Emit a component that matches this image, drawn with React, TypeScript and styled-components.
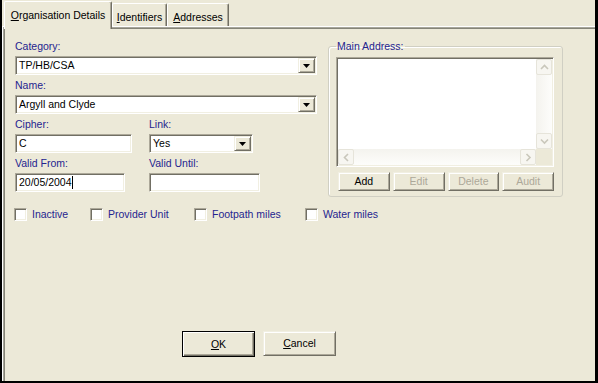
import React from "react";
import styled, { createGlobalStyle, css } from "styled-components";

const NAVY = "#24248f";
const FONT = `"Liberation Sans", Arial, sans-serif`;

const GlobalStyle = createGlobalStyle`
  html, body { margin: 0; padding: 0; background: #000; }
  body { font-family: ${FONT}; font-size: 10.5px; }
  * { box-sizing: border-box; }
`;

const Frame = styled.div`
  width: 598px;
  height: 383px;
  background: #000;
  padding: 0 3px 2px 2px;
`;

const Window = styled.div`
  height: 100%;
  background: #ece9d8;
  display: flex;
  flex-direction: column;
`;

const TabStrip = styled.div`
  display: flex;
  align-items: flex-end;
  height: 26px;
  padding-left: 2px;
  flex-shrink: 0;
`;

const Tab = styled.div<{ $active?: boolean; $w: number }>`
  position: relative;
  width: ${(p) => p.$w}px;
  height: ${(p) => (p.$active ? 28 : 23)}px;
  margin-bottom: ${(p) => (p.$active ? -3 : 0)}px;
  z-index: ${(p) => (p.$active ? 2 : 1)};
  padding-top: 7px;
  text-align: center;
  line-height: 13px;
  color: #000;
  background: #ece9d8;
  border-top: 1px solid #fff;
  border-left: 1px solid #fff;
  border-right: 1px solid #716f64;
  box-shadow: inset -1px 0 0 #aca899;
  border-radius: 2px 2px 0 0;
  white-space: nowrap;
`;

const Panel = styled.div`
  flex: 1;
  display: flex;
  flex-direction: column;
  border-top: 1px solid #fff;
  border-left: 1px solid #fff;
  box-shadow: inset 1px 1px 0 #a7a69a, inset 2px 2px 0 #858478;
  padding: 13px 0 24px 12px;
`;

const TopRow = styled.div`
  display: flex;
  align-items: flex-start;
  gap: 11px;
`;

const LeftColumn = styled.div`
  width: 302px;
  display: flex;
  flex-direction: column;
`;

const Field = styled.div`
  display: flex;
  flex-direction: column;
  margin-bottom: 4px;
`;

const FieldLabel = styled.div`
  color: ${NAVY};
  line-height: 13px;
  height: 13px;
  margin-bottom: 3px;
  white-space: nowrap;
`;

const FieldGrid = styled.div`
  display: grid;
  grid-template-columns: 134px 1fr;
`;

const sunken = css`
  background: #fff;
  border-style: solid;
  border-width: 1px;
  border-color: #aca899 #fff #fff #aca899;
  box-shadow: inset 1px 1px 0 #716f64, inset -1px -1px 0 #f1efe2;
`;

const raised = css`
  background: #ece9d8;
  border-style: solid;
  border-width: 1px;
  border-color: #f1efe2 #716f64 #716f64 #f1efe2;
  box-shadow: inset 1px 1px 0 #fff, inset -1px -1px 0 #aca899;
`;

const TextBox = styled.div<{ $w: number }>`
  ${sunken};
  width: ${(p) => p.$w}px;
  height: 19px;
  padding: 2px 2px 0 3px;
  line-height: 13px;
  color: #000;
  white-space: nowrap;
`;

const Caret = styled.span`
  display: inline-block;
  width: 1px;
  height: 13px;
  background: #000;
  vertical-align: top;
`;

const ComboBox = styled.div<{ $w: number }>`
  ${sunken};
  width: ${(p) => p.$w}px;
  height: 19px;
  padding: 1px;
  display: flex;
  align-items: stretch;
`;

const ComboText = styled.div`
  flex: 1;
  padding: 1px 0 0 2px;
  line-height: 13px;
  color: #000;
  white-space: nowrap;
`;

const DropButton = styled.div`
  ${raised};
  width: 17px;
  display: flex;
  align-items: center;
  justify-content: center;
`;

const GroupBox = styled.fieldset`
  width: 235px;
  margin: 0;
  min-width: 0;
  padding: 0 8px 5px 7px;
  border: 1px solid #d0cfc3;
  border-radius: 3px;
  box-shadow: inset 1px 1px 0 #fff;
`;

const GroupLegend = styled.legend`
  color: ${NAVY};
  line-height: 13px;
  padding: 0 1px;
  margin-left: 0;
`;

const ListBox = styled.div`
  ${sunken};
  margin-top: 4px;
  height: 110px;
  padding: 1px;
  display: grid;
  grid-template-columns: 1fr 16px;
  grid-template-rows: 1fr 16px;
`;

const ListArea = styled.div`
  background: #fff;
`;

const VScroll = styled.div`
  display: flex;
  flex-direction: column;
  justify-content: space-between;
  background: linear-gradient(to right, #f4f3ee, #fdfdfb);
`;

const HScroll = styled.div`
  display: flex;
  justify-content: space-between;
  background: linear-gradient(to bottom, #f4f3ee, #fdfdfb);
`;

const Corner = styled.div`
  background: #ece9d8;
`;

const ScrollArrow = styled.div`
  width: 16px;
  height: 16px;
  border: 1px solid #e6e4da;
  border-radius: 2px;
  background: #f7f6f1;
  display: flex;
  align-items: center;
  justify-content: center;
`;

const ActionRow = styled.div`
  display: flex;
  gap: 3px;
  margin-top: 5px;
  padding-left: 2px;
`;

const PushButton = styled.button<{ $w: number; $h: number; $default?: boolean }>`
  ${raised};
  width: ${(p) => p.$w}px;
  height: ${(p) => p.$h}px;
  padding: 0;
  font-family: ${FONT};
  font-size: 10.5px;
  line-height: 13px;
  color: #000;
  ${(p) =>
    p.$default &&
    css`
      border: 1px solid #000;
      box-shadow: inset 1px 1px 0 #fff, inset -1px -1px 0 #716f64, inset -2px -2px 0 #aca899;
    `}
  &:disabled {
    color: #aca899;
  }
`;

const CheckRow = styled.div`
  display: flex;
  margin-top: 11px;
  margin-left: -1px;
`;

const CheckItem = styled.label<{ $w?: number }>`
  display: flex;
  align-items: center;
  gap: 5px;
  ${(p) => (p.$w ? `width: ${p.$w}px;` : "")}
  color: ${NAVY};
  line-height: 13px;
  white-space: nowrap;
`;

const CheckBox = styled.span`
  width: 13px;
  height: 13px;
  flex-shrink: 0;
  ${sunken};
`;

const DialogButtons = styled.div`
  margin-top: auto;
  display: flex;
  gap: 8px;
  padding-left: 167px;
`;

const DownTriangle = () => (
  <svg width="7" height="4" viewBox="0 0 7 4">
    <polygon points="0,0 7,0 3.5,4" fill="#000" />
  </svg>
);

const Chevron = ({ dir }: { dir: "up" | "down" | "left" | "right" }) => {
  const pts = {
    up: "1,5 4.5,1.5 8,5",
    down: "1,1.5 4.5,5 8,1.5",
    left: "5,1 1.5,4.5 5,8",
    right: "1.5,1 5,4.5 1.5,8",
  }[dir];
  const vertical = dir === "up" || dir === "down";
  return (
    <svg width={vertical ? 9 : 7} height={vertical ? 7 : 9} viewBox={vertical ? "0 0 9 7" : "0 0 7 9"}>
      <polyline points={pts} fill="none" stroke="#c9c7bb" strokeWidth="1.6" />
    </svg>
  );
};

const Combo = ({ w, value }: { w: number; value: string }) => (
  <ComboBox $w={w}>
    <ComboText>{value}</ComboText>
    <DropButton>
      <DownTriangle />
    </DropButton>
  </ComboBox>
);

export default function App() {
  return (
    <>
      <GlobalStyle />
      <Frame>
        <Window>
          <TabStrip>
            <Tab $active $w={108}>
              <u>O</u>rganisation Details
            </Tab>
            <Tab $w={55}>
              <u>I</u>dentifiers
            </Tab>
            <Tab $w={62}>
              <u>A</u>ddresses
            </Tab>
          </TabStrip>
          <Panel>
            <TopRow>
              <LeftColumn>
                <Field>
                  <FieldLabel>Category:</FieldLabel>
                  <Combo w={302} value="TP/HB/CSA" />
                </Field>
                <Field>
                  <FieldLabel>Name:</FieldLabel>
                  <Combo w={302} value="Argyll and Clyde" />
                </Field>
                <FieldGrid>
                  <Field>
                    <FieldLabel>Cipher:</FieldLabel>
                    <TextBox $w={117}>C</TextBox>
                  </Field>
                  <Field>
                    <FieldLabel>Link:</FieldLabel>
                    <Combo w={104} value="Yes" />
                  </Field>
                  <Field>
                    <FieldLabel>Valid From:</FieldLabel>
                    <TextBox $w={110}>
                      20/05/2004
                      <Caret />
                    </TextBox>
                  </Field>
                  <Field>
                    <FieldLabel>Valid Until:</FieldLabel>
                    <TextBox $w={111} />
                  </Field>
                </FieldGrid>
              </LeftColumn>
              <GroupBox>
                <GroupLegend>Main Address:</GroupLegend>
                <ListBox>
                  <ListArea />
                  <VScroll>
                    <ScrollArrow>
                      <Chevron dir="up" />
                    </ScrollArrow>
                    <ScrollArrow>
                      <Chevron dir="down" />
                    </ScrollArrow>
                  </VScroll>
                  <HScroll>
                    <ScrollArrow>
                      <Chevron dir="left" />
                    </ScrollArrow>
                    <ScrollArrow>
                      <Chevron dir="right" />
                    </ScrollArrow>
                  </HScroll>
                  <Corner />
                </ListBox>
                <ActionRow>
                  <PushButton $w={52} $h={19}>Add</PushButton>
                  <PushButton $w={52} $h={19} disabled>
                    Edit
                  </PushButton>
                  <PushButton $w={52} $h={19} disabled>
                    Delete
                  </PushButton>
                  <PushButton $w={52} $h={19} disabled>
                    Audit
                  </PushButton>
                </ActionRow>
              </GroupBox>
            </TopRow>
            <CheckRow>
              <CheckItem $w={76}>
                <CheckBox />
                Inactive
              </CheckItem>
              <CheckItem $w={104}>
                <CheckBox />
                Provider Unit
              </CheckItem>
              <CheckItem $w={111}>
                <CheckBox />
                Footpath miles
              </CheckItem>
              <CheckItem>
                <CheckBox />
                Water miles
              </CheckItem>
            </CheckRow>
            <DialogButtons>
              <PushButton $w={73} $h={26} $default>
                <u>O</u>K
              </PushButton>
              <PushButton $w={73} $h={25}>
                <u>C</u>ancel
              </PushButton>
            </DialogButtons>
          </Panel>
        </Window>
      </Frame>
    </>
  );
}
